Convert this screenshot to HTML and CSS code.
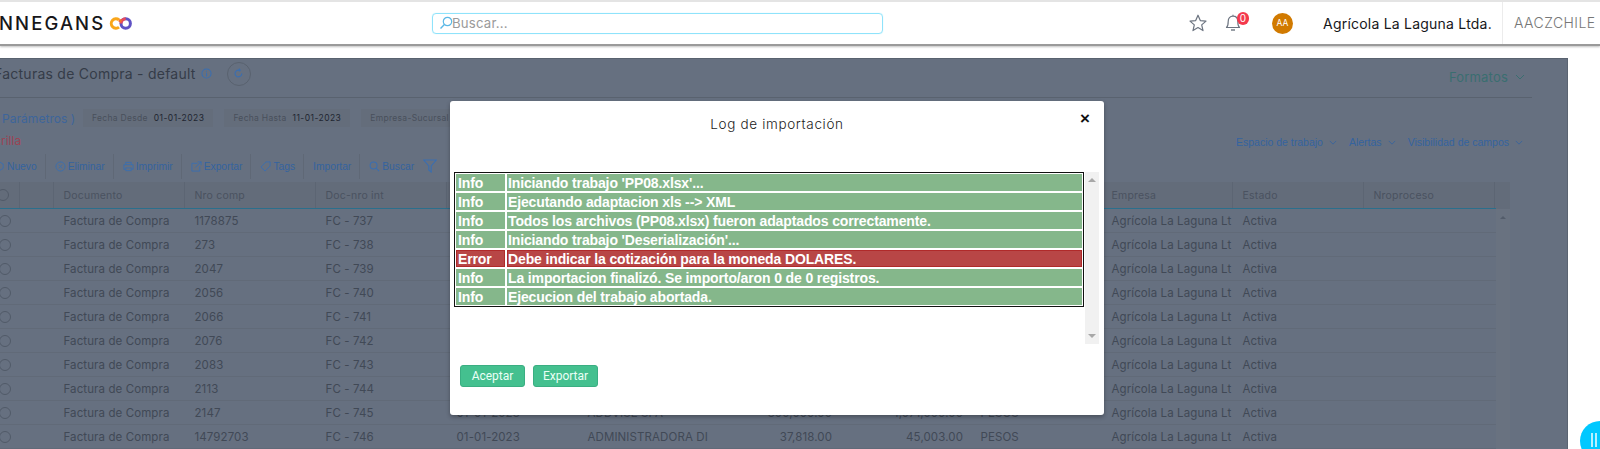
FILE: index.html
```html
<!DOCTYPE html>
<html lang="es">
<head>
<meta charset="utf-8">
<title>Facturas de Compra</title>
<link rel="stylesheet" href="styles.css">
</head>
<body>
<header class="topbar">
  <div class="brand">
    <span class="brand-name">NNEGANS</span>
    <svg class="brand-logo" viewBox="0 0 23 13" width="23" height="13" aria-hidden="true">
      <circle cx="16.7" cy="6.5" r="4.7" fill="none" stroke="#5f52c4" stroke-width="3"/>
      <path d="M10 2.9 A4.7 4.7 0 1 0 10 10.1" fill="none" stroke="#f9a61a" stroke-width="3"/>
      <path d="M16.7 1.8 A4.7 4.7 0 0 0 12 6.5" fill="none" stroke="#ea4a5a" stroke-width="3"/>
      <path d="M10 2.9 L12.4 4.4" fill="none" stroke="#f2702f" stroke-width="3"/>
    </svg>
  </div>
  <div class="search">
    <svg class="search-icon" viewBox="0 0 14 14" width="14" height="14" aria-hidden="true">
      <circle cx="8.5" cy="5.5" r="4.2" fill="none" stroke="#5bb8e6" stroke-width="1.2"/>
      <path d="M5.4 8.5 L1.5 12.5" stroke="#5bb8e6" stroke-width="1.4" fill="none"/>
    </svg>
    <span class="search-text">Buscar...</span>
  </div>
  <div class="top-actions">
    <svg class="star" viewBox="0 0 20 20" width="20" height="20" aria-hidden="true">
      <path d="M10 2.2 L12.3 7.6 L18 8.1 L13.7 11.9 L15 17.6 L10 14.6 L5 17.6 L6.3 11.9 L2 8.1 L7.7 7.6 Z" fill="none" stroke="#6c7480" stroke-width="1.2" stroke-linejoin="round"/>
    </svg>
    <div class="bell">
      <svg viewBox="0 0 16 20" width="16" height="20" aria-hidden="true">
        <path d="M1.5 15.5 C3.2 14 3.2 12 3.2 9.5 C3.2 6.2 5 4.2 8 4.2 C11 4.2 12.8 6.2 12.8 9.5 C12.8 12 12.8 14 14.5 15.5 Z M8 2.8 V4.2" fill="none" stroke="#6c7480" stroke-width="1.2" stroke-linejoin="round"/>
        <path d="M6 18 H10" stroke="#6c7480" stroke-width="1.4"/>
      </svg>
      <span class="badge">0</span>
    </div>
    <span class="avatar">AA</span>
    <span class="company">Agrícola La Laguna Ltda.</span>
    <span class="user">AACZCHILE</span>
  </div>
</header>

<main class="dimmed">
  <div class="title-row">
    <div class="title-left">
      <h1 class="title">Facturas de Compra - default</h1>
      <svg class="info-icon" viewBox="0 0 12 12" width="11" height="11" aria-hidden="true">
        <circle cx="6" cy="6" r="5" fill="none" stroke="#3a6eb0" stroke-width="1.1"/>
        <path d="M6 5.2 V9 M6 3 V4.2" stroke="#3a6eb0" stroke-width="1.1"/>
      </svg>
      <span class="refresh">
        <svg viewBox="0 0 12 12" width="11" height="11" aria-hidden="true">
          <path d="M9.6 6 A3.7 3.7 0 1 1 6 2.3 H7.5 M6.4 0.8 L7.9 2.3 L6.4 3.6" fill="none" stroke="#3a6eb0" stroke-width="1.2"/>
        </svg>
      </span>
    </div>
    <div class="formatos">Formatos
      <svg class="chev" viewBox="0 0 10 6" width="10" height="6" aria-hidden="true"><path d="M1 1 L5 5 L9 1" fill="none" stroke="#3a6e70" stroke-width="1"/></svg>
    </div>
  </div>
  <div class="params">
    <span class="params-link">Parámetros )</span>
    <span class="chip"><span class="chip-label">Fecha Desde</span> <span class="chip-value">01-01-2023</span></span>
    <span class="chip"><span class="chip-label">Fecha Hasta</span> <span class="chip-value">11-01-2023</span></span>
    <span class="chip"><span class="chip-label">Empresa-Sucursal</span></span>
  </div>
  <div class="grilla-row">
    <div class="grilla">Grilla</div>
    <div class="view-links">
      <span class="view-link">Espacio de trabajo <svg class="chev" viewBox="0 0 10 6" width="8" height="5" aria-hidden="true"><path d="M1 1 L5 5 L9 1" fill="none" stroke="#34639f" stroke-width="1"/></svg></span>
      <span class="view-link">Alertas <svg class="chev" viewBox="0 0 10 6" width="8" height="5" aria-hidden="true"><path d="M1 1 L5 5 L9 1" fill="none" stroke="#34639f" stroke-width="1"/></svg></span>
      <span class="view-link">Visibilidad de campos <svg class="chev" viewBox="0 0 10 6" width="8" height="5" aria-hidden="true"><path d="M1 1 L5 5 L9 1" fill="none" stroke="#34639f" stroke-width="1"/></svg></span>
    </div>
  </div>
  <div class="toolbar">
    <span class="tool first">
      <svg viewBox="0 0 12 12" width="11" height="11" aria-hidden="true"><path d="M6 1 L10 3.3 V8 L6 10.5 L2 8 V3.3 Z" fill="none" stroke="#3a6eb0"/></svg>Nuevo</span>
    <span class="tool">
      <svg viewBox="0 0 12 12" width="11" height="11" aria-hidden="true"><circle cx="6" cy="6" r="5" fill="none" stroke="#3a6eb0"/><path d="M4 4 L8 8 M8 4 L4 8" stroke="#3a6eb0"/></svg>Eliminar</span>
    <span class="tool">
      <svg viewBox="0 0 12 12" width="11" height="11" aria-hidden="true"><path d="M3 4 V1.5 H9 V4 M3 9 H1 V4 H11 V9 H9 M3 7.5 H9 V10.5 H3 Z" fill="none" stroke="#3a6eb0"/></svg>Imprimir</span>
    <span class="tool">
      <svg viewBox="0 0 12 12" width="11" height="11" aria-hidden="true"><path d="M7 2.5 H1 V11 H9.5 V6 M5 7 L11 1 M7.5 1 H11 V4.5" fill="none" stroke="#3a6eb0"/></svg>Exportar</span>
    <span class="tool">
      <svg viewBox="0 0 12 12" width="11" height="11" aria-hidden="true"><path d="M1 6.5 L6.5 1 H11 V5.5 L5.5 11 Z" fill="none" stroke="#3a6eb0"/></svg>Tags</span>
    <span class="tool">Importar</span>
    <span class="tool last">
      <svg viewBox="0 0 12 12" width="11" height="11" aria-hidden="true"><circle cx="5" cy="5" r="3.8" fill="none" stroke="#3a6eb0" stroke-width="1.1"/><path d="M8 8 L11 11" stroke="#3a6eb0" stroke-width="1.1"/></svg>Buscar</span>
    <svg class="filter" viewBox="0 0 14 14" width="14" height="14" aria-hidden="true"><path d="M.7 1 H13.3 L8.2 7 V13 L5.8 11.3 V7 Z" fill="none" stroke="#3a6eb0" stroke-width="1.1"/></svg>
  </div>

  <div class="grid-wrap">
    <div class="grid">
      <div class="row head">
        <span class="c-check"><i class="radio"></i></span><span class="c-blank"></span>
        <span class="c">Documento</span><span class="c">Nro comp</span><span class="c">Doc-nro int</span>
        <span class="c"></span><span class="c"></span><span class="c"></span><span class="c"></span><span class="c"></span>
        <span class="c">Empresa</span><span class="c">Estado</span><span class="c">Nroproceso</span>
      </div>
      <div class="row"><span class="c-check"><i class="radio"></i></span><span class="c-blank"></span><span class="c">Factura de Compra</span><span class="c">1178875</span><span class="c">FC - 737</span><span class="c"></span><span class="c"></span><span class="c"></span><span class="c"></span><span class="c"></span><span class="c">Agrícola La Laguna Lt</span><span class="c">Activa</span><span class="c"></span></div>
      <div class="row"><span class="c-check"><i class="radio"></i></span><span class="c-blank"></span><span class="c">Factura de Compra</span><span class="c">273</span><span class="c">FC - 738</span><span class="c"></span><span class="c"></span><span class="c"></span><span class="c"></span><span class="c"></span><span class="c">Agrícola La Laguna Lt</span><span class="c">Activa</span><span class="c"></span></div>
      <div class="row"><span class="c-check"><i class="radio"></i></span><span class="c-blank"></span><span class="c">Factura de Compra</span><span class="c">2047</span><span class="c">FC - 739</span><span class="c"></span><span class="c"></span><span class="c"></span><span class="c"></span><span class="c"></span><span class="c">Agrícola La Laguna Lt</span><span class="c">Activa</span><span class="c"></span></div>
      <div class="row"><span class="c-check"><i class="radio"></i></span><span class="c-blank"></span><span class="c">Factura de Compra</span><span class="c">2056</span><span class="c">FC - 740</span><span class="c"></span><span class="c"></span><span class="c"></span><span class="c"></span><span class="c"></span><span class="c">Agrícola La Laguna Lt</span><span class="c">Activa</span><span class="c"></span></div>
      <div class="row"><span class="c-check"><i class="radio"></i></span><span class="c-blank"></span><span class="c">Factura de Compra</span><span class="c">2066</span><span class="c">FC - 741</span><span class="c"></span><span class="c"></span><span class="c"></span><span class="c"></span><span class="c"></span><span class="c">Agrícola La Laguna Lt</span><span class="c">Activa</span><span class="c"></span></div>
      <div class="row"><span class="c-check"><i class="radio"></i></span><span class="c-blank"></span><span class="c">Factura de Compra</span><span class="c">2076</span><span class="c">FC - 742</span><span class="c"></span><span class="c"></span><span class="c"></span><span class="c"></span><span class="c"></span><span class="c">Agrícola La Laguna Lt</span><span class="c">Activa</span><span class="c"></span></div>
      <div class="row"><span class="c-check"><i class="radio"></i></span><span class="c-blank"></span><span class="c">Factura de Compra</span><span class="c">2083</span><span class="c">FC - 743</span><span class="c"></span><span class="c"></span><span class="c"></span><span class="c"></span><span class="c"></span><span class="c">Agrícola La Laguna Lt</span><span class="c">Activa</span><span class="c"></span></div>
      <div class="row"><span class="c-check"><i class="radio"></i></span><span class="c-blank"></span><span class="c">Factura de Compra</span><span class="c">2113</span><span class="c">FC - 744</span><span class="c"></span><span class="c"></span><span class="c"></span><span class="c"></span><span class="c"></span><span class="c">Agrícola La Laguna Lt</span><span class="c">Activa</span><span class="c"></span></div>
      <div class="row"><span class="c-check"><i class="radio"></i></span><span class="c-blank"></span><span class="c">Factura de Compra</span><span class="c">2147</span><span class="c">FC - 745</span><span class="c">01-01-2023</span><span class="c">ADDVISE SPA</span><span class="c num">300,000.00</span><span class="c num">1,071,000.00</span><span class="c">PESOS</span><span class="c">Agrícola La Laguna Lt</span><span class="c">Activa</span><span class="c"></span></div>
      <div class="row"><span class="c-check"><i class="radio"></i></span><span class="c-blank"></span><span class="c">Factura de Compra</span><span class="c">14792703</span><span class="c">FC - 746</span><span class="c">01-01-2023</span><span class="c">ADMINISTRADORA DI</span><span class="c num">37,818.00</span><span class="c num">45,003.00</span><span class="c">PESOS</span><span class="c">Agrícola La Laguna Lt</span><span class="c">Activa</span><span class="c"></span></div>
    </div>
    <div class="grid-scroll"><div class="grid-scroll-head"></div><i class="grid-arrow"></i></div>
  </div>
</main>

<section class="modal">
  <div class="modal-head">
    <h2 class="modal-title">Log de importación</h2>
    <span class="close">×</span>
  </div>
  <div class="log-wrap">
    <div class="log-scroll">
      <table class="log">
        <tr class="ok"><td class="lvl">Info</td><td>Iniciando trabajo 'PP08.xlsx'...</td></tr>
        <tr class="ok"><td class="lvl">Info</td><td>Ejecutando adaptacion xls --&gt; XML</td></tr>
        <tr class="ok"><td class="lvl">Info</td><td>Todos los archivos (PP08.xlsx) fueron adaptados correctamente.</td></tr>
        <tr class="ok"><td class="lvl">Info</td><td>Iniciando trabajo 'Deserialización'...</td></tr>
        <tr class="err"><td class="lvl">Error</td><td>Debe indicar la cotización para la moneda DOLARES.</td></tr>
        <tr class="ok"><td class="lvl">Info</td><td>La importacion finalizó. Se importo/aron 0 de 0 registros.</td></tr>
        <tr class="ok"><td class="lvl">Info</td><td>Ejecucion del trabajo abortada.</td></tr>
      </table>
    </div>
    <div class="scrollbar"><i class="arrow-up"></i><i class="arrow-down"></i></div>
  </div>
  <div class="modal-actions">
    <button class="btn" type="button">Aceptar</button>
    <button class="btn" type="button">Exportar</button>
  </div>
</section>

<span class="fab"><i></i><i></i></span>
</body>
</html>
```
FILE: styles.css
```css
* { box-sizing: border-box; }
html, body { margin: 0; padding: 0; }
body {
  width: 1600px; height: 449px; overflow: hidden; background: #fff; position: relative;
  font-family: "Inter", "Open Sans", sans-serif; color: #333;
}
.topbar {
  height: 46px; border-top: 2px solid #e4e4e4; border-bottom: 2px solid #9a9a9a;
  box-shadow: 0 1px 2px rgba(0,0,0,.25); background: #fff;
  display: flex; align-items: center; position: relative;
}
.brand { width: 421px; display: flex; align-items: center; gap: 4px; margin-left: -1px; flex: none; }
.brand-name { font-size: 18.5px; font-weight: 500; letter-spacing: 2.1px; color: #17171a; line-height: 1; }
.search {
  width: 451px; height: 21px; border: 1px solid #8fe3fb; border-radius: 4px;
  display: flex; align-items: center; padding-left: 6px; margin-left: 12px; box-shadow: 0 0 1px #a8ecff;
}
.search-text { font-size: 13.2px; color: #9a9a9a; margin-left: -1px; letter-spacing: .2px; }
.top-actions { display: flex; align-items: center; margin-left: auto; height: 100%; }
.star { margin-right: 17px; }
.bell { position: relative; width: 16px; height: 20px; margin-right: 31px; top: -1px; }
.badge {
  position: absolute; left: 12px; top: 0; width: 12px; height: 13px; border-radius: 6px;
  background: #f4394c; color: #fff; font-size: 10px; text-align: center; line-height: 13px;
}
.avatar {
  width: 21px; height: 21px; border-radius: 50%; background: #d17a00; color: #fff;
  font-size: 8.5px; display: flex; align-items: center; justify-content: center; margin-right: 30px;
}
.company { font-size: 14px; color: #17171a; width: 179px; white-space: nowrap; letter-spacing: .22px; }
.user { font-size: 14px; font-weight: 300; color: #777; border-left: 1px solid #ececec; height: 42px; line-height: 42px; width: 98px; padding-left: 11px; letter-spacing: .45px; white-space: nowrap; }

.dimmed {
  position: absolute; left: 0; top: 58px; width: 1568px; height: 391px; background: #667080;
  border-top: 1px solid #59626f; border-right: 1px solid #5a6472; overflow: hidden;
}
.title-row {
  width: 1532px; height: 39px; display: flex; justify-content: space-between; align-items: center;
  border-bottom: 1px solid #59626f; padding-right: 7px;
}
.title-left { display: flex; align-items: center; margin-left: -6px; margin-bottom: 9px; }
.title { font-size: 14px; font-weight: 400; margin: 0; color: #353c48; letter-spacing: .25px; white-space: nowrap; }
.info-icon { margin-left: 5px; }
.refresh {
  width: 24px; height: 24px; border-radius: 50%; border: 1px solid #59626f; margin-left: 15px;
  display: flex; align-items: center; justify-content: center;
}
.formatos { font-size: 13px; color: #3a6e70; display: flex; align-items: center; gap: 7px; letter-spacing: .2px; margin-bottom: 2px; }

.params { display: flex; align-items: center; height: 24px; margin-top: 8px; gap: 5px; }
.params-link { font-size: 12px; color: #3d659b; width: 76px; margin-left: 2px; letter-spacing: .05px; white-space: nowrap; }
.chip { background: #646d7b; height: 18px; padding: 0 9px; display: inline-flex; align-items: center; gap: 6px; margin-right: 6px; font-size: 8.5px; white-space: nowrap; letter-spacing: .3px; }
.chip-label { color: #49505c; }
.chip-value { color: #1f2631; letter-spacing: .45px; }

.grilla-row { display: flex; justify-content: space-between; align-items: center; height: 17px; margin-top: 2px; width: 1532px; padding-right: 9px; }
.grilla { font-size: 12px; color: #9b4453; margin-left: -8px; margin-bottom: 1px; }
.view-links { display: flex; gap: 12px; font-family: "Liberation Sans", sans-serif; font-size: 10.5px; color: #34639f; padding-top: 3px; }
.view-link { display: inline-flex; align-items: center; gap: 6px; white-space: nowrap; }

.toolbar { display: flex; align-items: center; height: 30px; margin-top: 2px; font-family: "Liberation Sans", sans-serif; font-size: 10.25px; color: #34639f; margin-left: -6px; }
.tool { display: flex; align-items: center; gap: 2px; height: 25px; padding: 0 8px 0 9px; border-right: 1px solid #5f6876; white-space: nowrap; }
.tool.first { padding-left: 0; }
.tool.last { border-right: 0; padding-right: 9px; }

.grid-wrap { display: flex; margin-top: 1px; }
.grid { width: 1496px; font-size: 11.5px; letter-spacing: .1px; color: #414956; flex: none; }
.row { display: flex; height: 24.05px; align-items: center; border-bottom: 1px solid #616a78; }
.row span { white-space: nowrap; overflow: hidden; height: 100%; display: flex; align-items: center; flex: none; }
.c { width: 131px; padding-left: 9.5px; }
.c.num { justify-content: flex-end; padding-left: 0; padding-right: 8px; }
.c-check { width: 20px; overflow: visible !important; }
.c-blank { width: 34px; }
.row.head { height: 27px; background: #636c7a; color: #4a5260; font-size: 10.5px; border-bottom: 1px solid #2b6f8c; letter-spacing: .2px; }
.row.head span { border-right: 1px solid #5c6573; }
.radio { display: block; width: 12px; height: 12px; border: 1px solid #515a68; border-radius: 50%; margin-left: -1px; flex: none; }
.head .radio { margin-left: -3px; }
.grid-scroll { width: 14px; background: #697280; display: flex; flex-direction: column; align-items: center; }
.grid-scroll-head { width: 100%; height: 27px; background: #636c7a; }
.grid-arrow { width: 0; height: 0; border: 3px solid transparent; border-top: 0; border-bottom: 3px solid #535c6a; margin-top: 7px; }

.modal {
  position: absolute; left: 450px; top: 101px; width: 654px; height: 314px; background: #fff;
  border-radius: 3px; box-shadow: 0 2px 4px rgba(0,0,0,.3);
}
.modal-head { height: 71px; position: relative; display: flex; justify-content: center; padding-top: 15px; }
.modal-title { margin: 0; font-size: 13.5px; font-weight: 300; color: #222; letter-spacing: .65px; line-height: 16px; }
.close { position: absolute; left: 630px; top: 7px; font-size: 17px; font-weight: 700; color: #111; font-family: "Liberation Sans", sans-serif; line-height: 22px; }
.log-wrap { display: flex; margin-left: 4px; height: 172px; }
.log-scroll { width: 630px; flex: none; }
.log {
  width: 100%; border: 1px solid #111; border-collapse: separate; border-spacing: 0;
  font-family: "Liberation Sans", sans-serif; font-size: 14px; letter-spacing: -.13px; font-weight: 700; color: #fff;
}
.log td { padding: 1px 0 0 1px; height: 19px; line-height: 15px; white-space: nowrap; border: 1px solid #fff; }
.log .lvl { width: 51px; padding-left: 2px; }
.ok td { background: #85b78b; }
.err td { background: #b84646; box-shadow: inset 0 0 0 1px #b02a2a; }
.scrollbar { width: 14px; margin-left: 1px; background: #f1f1f1; position: relative; }
.arrow-up, .arrow-down { position: absolute; left: 3px; width: 0; height: 0; border: 4px solid transparent; }
.arrow-up { top: 6px; border-bottom: 4px solid #a8a8a8; border-top: 0; }
.arrow-down { bottom: 6px; border-top: 4px solid #a8a8a8; border-bottom: 0; }
.modal-actions { display: flex; gap: 8px; margin-top: 21px; margin-left: 10px; }
.btn {
  width: 65px; height: 22px; padding: 0; background: #44c08f; color: #eafff6; border: 1px solid #3aae82; border-radius: 3px;
  font-family: "Roboto", "Liberation Sans", sans-serif; font-size: 12px;
}

.fab {
  position: absolute; left: 1580px; top: 421px; width: 40px; height: 40px; border-radius: 50%; background: #00c8ff;
  display: flex; gap: 2px; padding: 12px 0 0 11px;
}
.fab i { display: block; width: 2px; height: 14px; background: #b5f0ff; }
```
